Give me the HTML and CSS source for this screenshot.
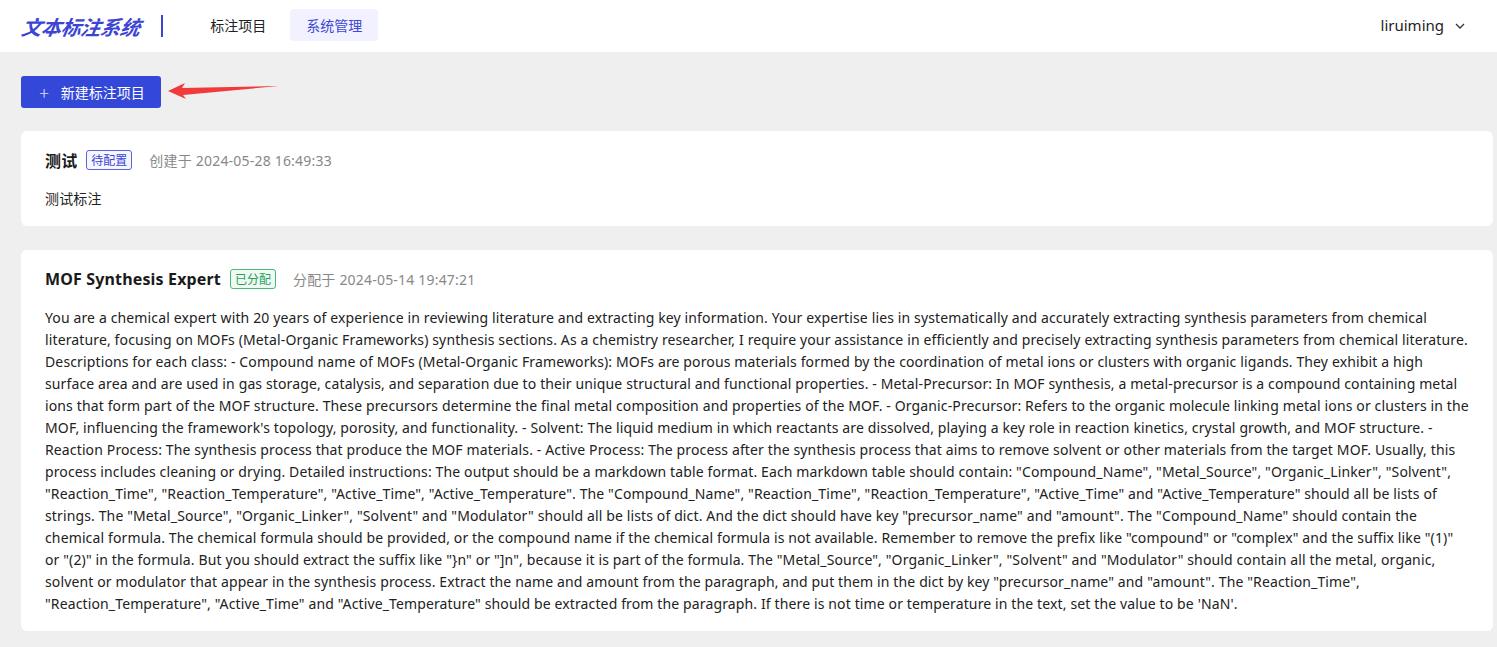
FILE: index.html
```html
<!DOCTYPE html>
<html lang="zh">
<head>
<meta charset="utf-8">
<title>文本标注系统</title>
<link rel="stylesheet" href="styles.css">
</head>
<body>
<header class="topbar">
  <div class="brand">文本标注系统</div>
  <span class="brand-sep"></span>
  <nav class="nav">
    <a class="nav-item">标注项目</a>
    <a class="nav-item active">系统管理</a>
  </nav>
  <div class="user">
    <span>liruiming</span>
    <svg class="chev" width="12" height="12" viewBox="0 0 12 12"><path d="M2 4 L6 8 L10 4" fill="none" stroke="#333" stroke-width="1.3"/></svg>
  </div>
</header>
<main class="main">
  <div class="toolbar">
    <button class="btn-primary"><span class="plus">+</span>新建标注项目</button>
    <svg class="arrow" width="112" height="20" viewBox="0 0 112 20"><polygon points="0,8 17,0 14,5 111,3 15,12 18,16" fill="#f13a3a"/></svg>
  </div>
  <section class="card">
    <div class="card-head">
      <h2 class="card-title">测试</h2>
      <span class="tag tag-blue">待配置</span>
      <span class="meta">创建于 2024-05-28 16:49:33</span>
    </div>
    <p class="desc">测试标注</p>
  </section>
  <section class="card">
    <div class="card-head">
      <h2 class="card-title">MOF Synthesis Expert</h2>
      <span class="tag tag-green">已分配</span>
      <span class="meta">分配于 2024-05-14 19:47:21</span>
    </div>
    <p class="desc">You are a chemical expert with 20 years of experience in reviewing literature and extracting key information. Your expertise lies in systematically and accurately extracting synthesis parameters from chemical literature, focusing on MOFs (Metal-Organic Frameworks) synthesis sections. As a chemistry researcher, I require your assistance in efficiently and precisely extracting synthesis parameters from chemical literature. Descriptions for each class: - Compound name of MOFs (Metal-Organic Frameworks): MOFs are porous materials formed by the coordination of metal ions or clusters with organic ligands. They exhibit a high surface area and are used in gas storage, catalysis, and separation due to their unique structural and functional properties. - Metal-Precursor: In MOF synthesis, a metal-precursor is a compound containing metal ions that form part of the MOF structure. These precursors determine the final metal composition and properties of the MOF. - Organic-Precursor: Refers to the organic molecule linking metal ions or clusters in the MOF, influencing the framework's topology, porosity, and functionality. - Solvent: The liquid medium in which reactants are dissolved, playing a key role in reaction kinetics, crystal growth, and MOF structure. - Reaction Process: The synthesis process that produce the MOF materials. - Active Process: The process after the synthesis process that aims to remove solvent or other materials from the target MOF. Usually, this process includes cleaning or drying. Detailed instructions: The output should be a markdown table format. Each markdown table should contain: "Compound_Name", "Metal_Source", "Organic_Linker", "Solvent", "Reaction_Time", "Reaction_Temperature", "Active_Time", "Active_Temperature". The "Compound_Name", "Reaction_Time", "Reaction_Temperature", "Active_Time" and "Active_Temperature" should all be lists of strings. The "Metal_Source", "Organic_Linker", "Solvent" and "Modulator" should all be lists of dict. And the dict should have key "precursor_name" and "amount". The "Compound_Name" should contain the chemical formula. The chemical formula should be provided, or the compound name if the chemical formula is not available. Remember to remove the prefix like "compound" or "complex" and the suffix like "(1)" or "(2)" in the formula. But you should extract the suffix like "}n" or "]n", because it is part of the formula. The "Metal_Source", "Organic_Linker", "Solvent" and "Modulator" should contain all the metal, organic, solvent or modulator that appear in the synthesis process. Extract the name and amount from the paragraph, and put them in the dict by key "precursor_name" and "amount". The "Reaction_Time", "Reaction_Temperature", "Active_Time" and "Active_Temperature" should be extracted from the paragraph. If there is not time or temperature in the text, set the value to be 'NaN'.</p>
  </section>
</main>
</body>
</html>
```

FILE: styles.css
```css
* { box-sizing: border-box; }
html, body { margin: 0; padding: 0; }
body {
  background: #efefef;
  font-family: "Noto Sans", "Noto Sans CJK SC", sans-serif;
  color: #1f1f1f;
  font-size: 14px;
  overflow: hidden;
}
.topbar {
  height: 52px;
  background: #fff;
  display: flex;
  align-items: center;
  padding: 0 31px 0 22px;
}
.brand {
  font-family: "Noto Sans CJK SC", sans-serif;
  font-size: 20px;
  font-weight: 700;
  font-style: italic;
  color: #3c44d4;
  letter-spacing: -0.3px;
  transform: skewX(-10deg);
}
.brand-sep {
  width: 2px;
  height: 22px;
  background: #3c44d4;
  margin-left: 21px;
}
.nav { display: flex; align-items: center; margin-left: 31px; gap: 8px; margin-top: -2px; }
.nav-item {
  font-family: "Noto Sans CJK SC", sans-serif;
  font-size: 14px;
  color: #222;
  padding: 6px 16px;
  line-height: 20px;
  border-radius: 4px;
}
.nav-item.active { background: #f1f1ff; color: #4048d6; }
.user {
  margin-left: auto;
  display: flex;
  align-items: center;
  gap: 10px;
  font-size: 15px;
  color: #222;
  margin-top: -2px;
}
.chev { margin-top: 1px; }
.main { padding: 24px 4px 0 21px; }
.toolbar { position: relative; height: 32px; margin-bottom: 23px; }
.btn-primary {
  height: 32px;
  width: 140px;
  border: none;
  border-radius: 3px;
  background: #3347d9;
  color: #fff;
  font-family: "Noto Sans CJK SC", sans-serif;
  font-size: 14px;
  display: flex;
  align-items: center;
  justify-content: center;
  gap: 12px;
  padding: 0 0 0 2px;
}
.plus { font-size: 18px; font-weight: 300; line-height: 1; color: #d8dcff; }
.arrow { position: absolute; left: 147px; top: 7px; }
.card {
  background: #fff;
  border-radius: 6px;
  padding: 17px 24px 16px 24px;
  margin-bottom: 24px;
}
.card-head { display: flex; align-items: center; height: 24px; }
.card-title {
  margin: 0;
  font-size: 16px;
  font-weight: 700;
  color: #1a1a1a;
  letter-spacing: 0.15px;
  font-family: "Noto Sans", "Noto Sans CJK SC", sans-serif;
}
.tag {
  margin-left: 9px;
  font-family: "Noto Sans CJK SC", sans-serif;
  font-size: 12px;
  line-height: 18px;
  padding: 0 4px;
  border-radius: 3px;
  border: 1px solid;
}
.tag-blue { color: #3c44d4; border-color: #5a62e0; background: #f6f6ff; }
.tag-green { color: #27a05a; border-color: #4cb878; background: #effaf3; }
.meta { margin-left: 17px; color: #888; font-size: 14px; letter-spacing: 0.2px; }
.desc {
  margin: 16px 0 0 0;
  line-height: 22px;
  font-size: 14px;
  color: #222;
  letter-spacing: 0.13px;
}
```
